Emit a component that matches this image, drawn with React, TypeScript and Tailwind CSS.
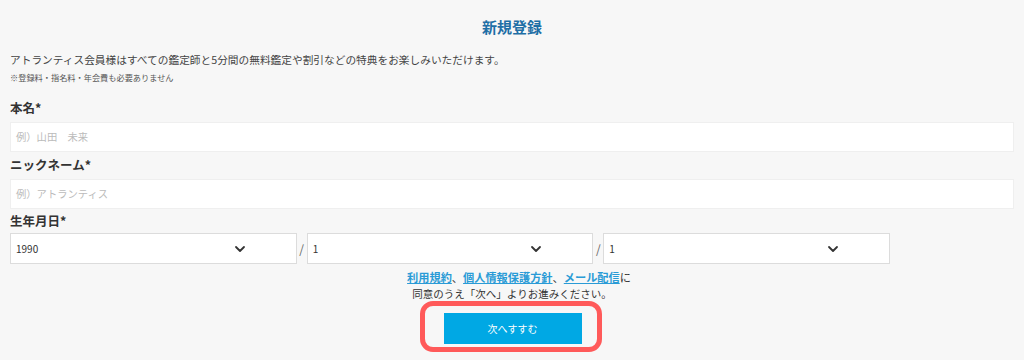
import React from "react";

const font = { fontFamily: '"Noto Sans CJK JP", "Noto Sans", sans-serif' };

function Chevron() {
  return (
    <svg width="12" height="8" viewBox="0 0 12 8" fill="none">
      <path d="M2 2 L6 6 L10 2" stroke="#333" strokeWidth="1.8" strokeLinecap="round" strokeLinejoin="round" />
    </svg>
  );
}

function Select({ value }: { value: string }) {
  return (
    <div className="flex-1 h-[31px] bg-white border border-[#dcdcdc] flex items-center pl-[5px] pr-[50px] justify-between">
      <span className="text-[10px] text-[#333]">{value}</span>
      <Chevron />
    </div>
  );
}

export default function App() {
  return (
    <div className="w-[1024px] h-[360px] bg-[#f7f7f7] px-[10px] overflow-hidden" style={font}>
      <div className="pt-[16px] h-[38px] text-center text-[15px] leading-[22px] font-bold text-[#1f6fa6]">新規登録</div>
      <div className="mt-[14px] h-[16px] leading-[16px] text-[10.7px] text-[#444]">
        アトランティス会員様はすべての鑑定師と5分間の無料鑑定や割引などの特典をお楽しみいただけます。
      </div>
      <div className="mt-[3px] h-[12px] leading-[12px] text-[8.2px] text-[#555]">※登録料・指名料・年会費も必要ありません</div>

      <div className="mt-[16px] h-[18px] leading-[18px] text-[12.5px] font-bold text-[#333]">本名*</div>
      <div className="mt-[5px] h-[30px] bg-white border border-[#efefef] flex items-center px-[5px]">
        <span className="text-[10.3px] text-[#bbb]">例）山田　未来</span>
      </div>

      <div className="mt-[4px] h-[18px] leading-[18px] text-[12.5px] font-bold text-[#333]">ニックネーム*</div>
      <div className="mt-[5px] h-[30px] bg-white border border-[#efefef] flex items-center px-[5px]">
        <span className="text-[10.3px] text-[#bbb]">例）アトランティス</span>
      </div>

      <div className="mt-[3px] h-[18px] leading-[18px] text-[12.5px] font-bold text-[#333]">生年月日*</div>
      <div className="mt-[3px] w-[880px] flex items-center">
        <Select value="1990" />
        <span className="w-[10px] text-center text-[12px] text-[#666]">/</span>
        <Select value="1" />
        <span className="w-[10px] text-center text-[12px] text-[#666]">/</span>
        <Select value="1" />
      </div>

      <div className="mt-[5px] pl-[14px] h-[16px] leading-[16px] text-center text-[11.2px] text-[#333]">
        <a className="text-[#2a9bd6] underline font-bold">利用規約</a>、
        <a className="text-[#2a9bd6] underline font-bold">個人情報保護方針</a>、
        <a className="text-[#2a9bd6] underline font-bold">メール配信</a>に
      </div>
      <div className="mt-[1px] h-[16px] leading-[16px] text-center text-[10.5px] text-[#333]">
        同意のうえ「次へ」よりお進みください。
      </div>

      <div className="flex justify-center">
        <div className="ml-[-3px] border-[5px] border-[#ff5a5a] rounded-[13px] pt-[7px] pb-[3px] pl-[19px] pr-[15px] mt-[-1px]">
          <div className="w-[138px] h-[31px] bg-[#00a8e4] flex items-center justify-center text-white text-[10px]">
            次へすすむ
          </div>
        </div>
      </div>
    </div>
  );
}
